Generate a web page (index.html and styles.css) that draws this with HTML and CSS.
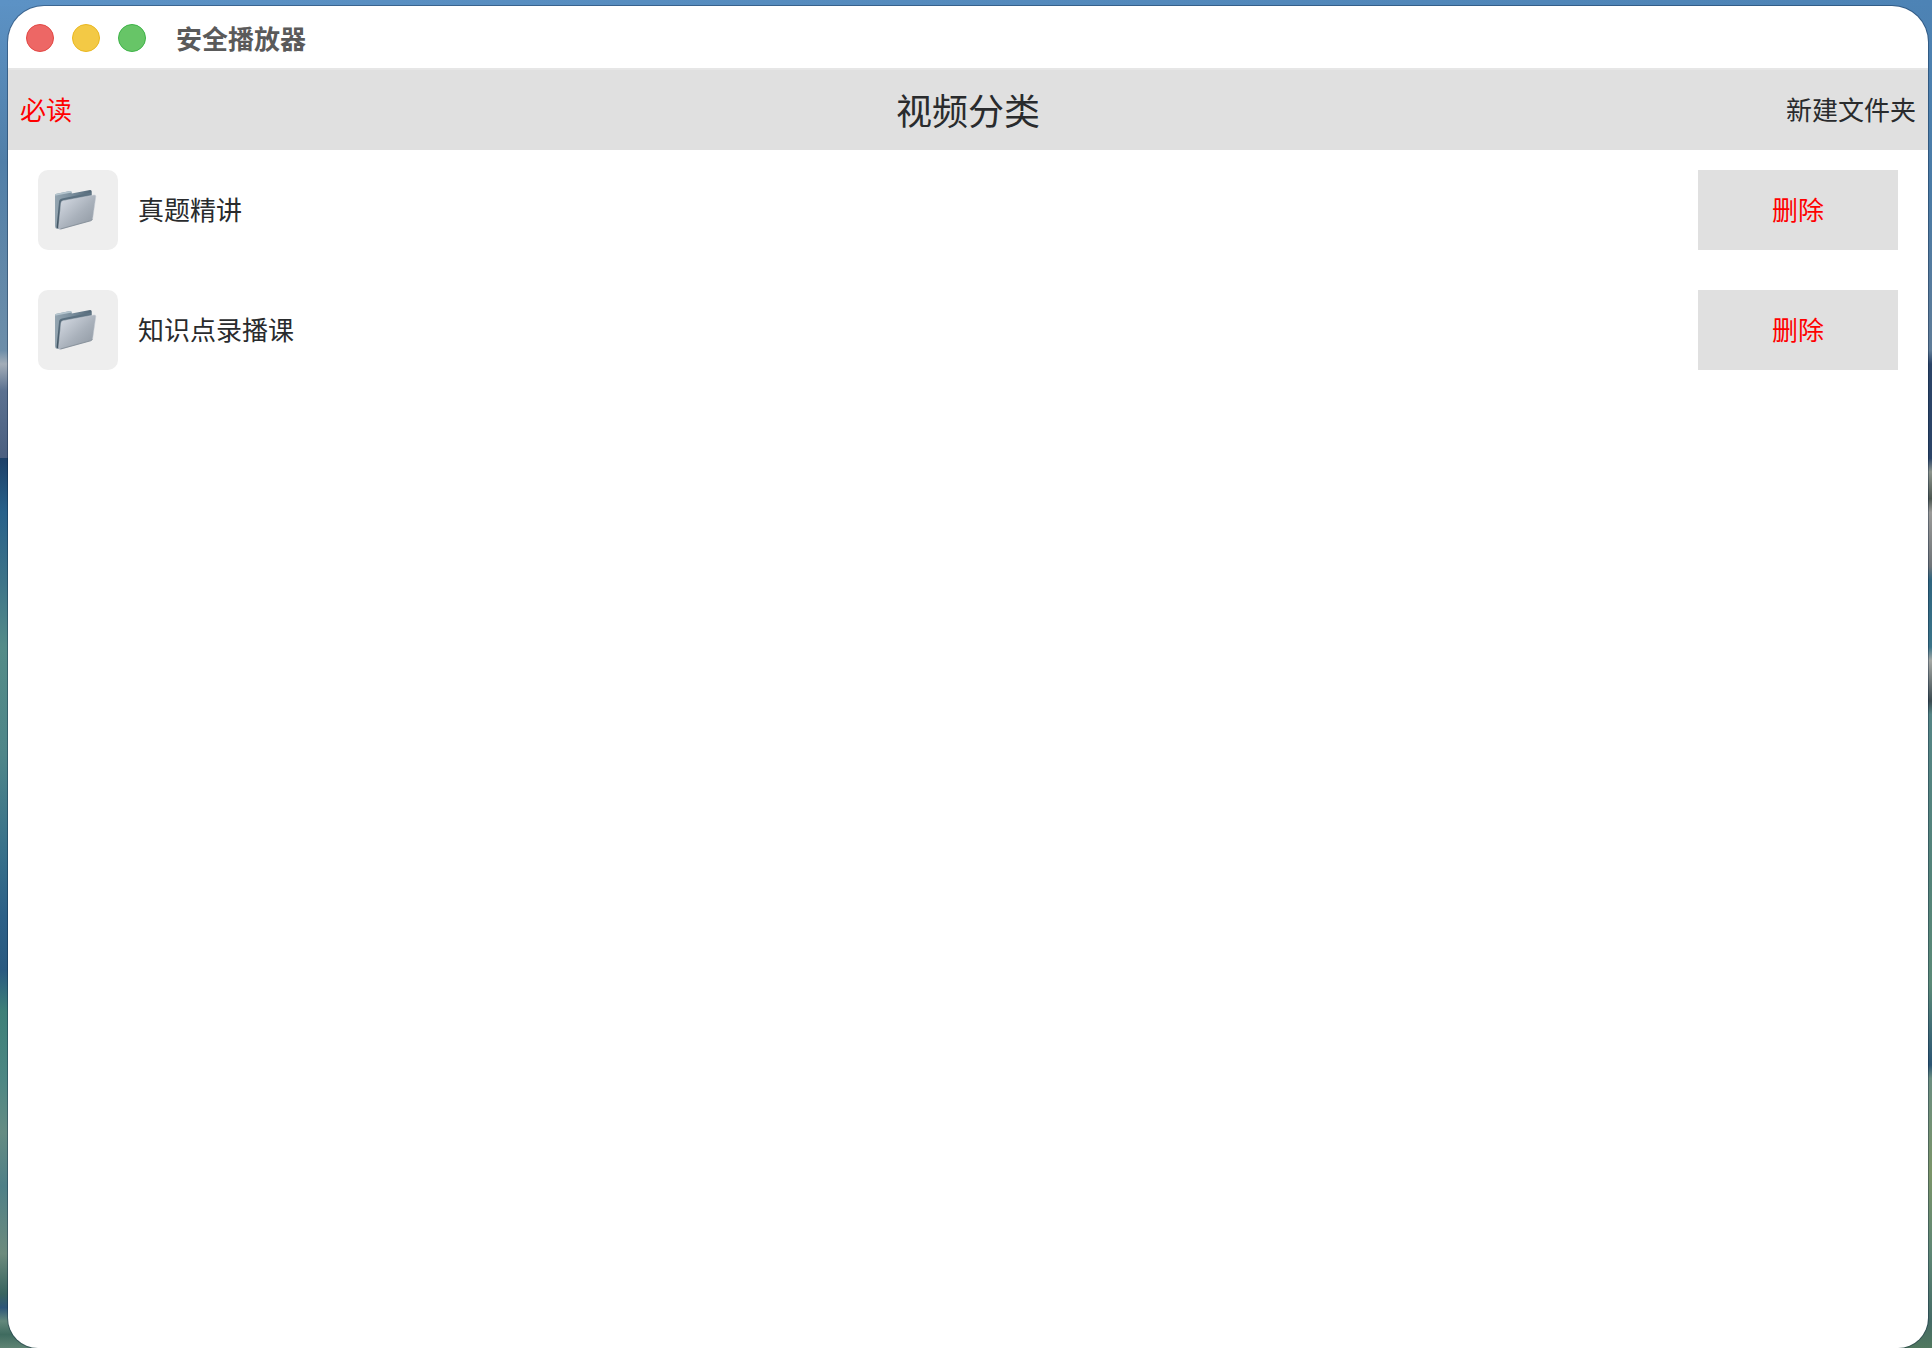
FILE: index.html
```html
<!DOCTYPE html>
<html lang="zh-CN">
<head>
<meta charset="utf-8">
<meta name="viewport" content="width=device-width, initial-scale=1">
<title>安全播放器</title>
<link rel="stylesheet" href="styles.css">
</head>
<body>
<svg class="defs" width="0" height="0" aria-hidden="true">
  <defs>
    <linearGradient id="front" x1="0" y1="0" x2="1" y2="1">
      <stop offset="0" stop-color="#bcc6d0"/>
      <stop offset="0.15" stop-color="#cdd3dc"/>
      <stop offset="0.55" stop-color="#a9b1bb"/>
      <stop offset="1" stop-color="#8b949e"/>
    </linearGradient>
    <linearGradient id="back" x1="0" y1="0" x2="1" y2="0">
      <stop offset="0" stop-color="#94a5b1"/>
      <stop offset="0.35" stop-color="#8094a2"/>
      <stop offset="1" stop-color="#526777"/>
    </linearGradient>
    <linearGradient id="inner" x1="0" y1="0" x2="0" y2="1">
      <stop offset="0" stop-color="#5f7585"/>
      <stop offset="1" stop-color="#405361"/>
    </linearGradient>
    <symbol id="folder" viewBox="0 0 80 80">
      <path fill="url(#back)" d="M17 25.500Q17 24 18.500 23.700L32 21Q33.500 20.800 33.700 22.500V23.500L52 20Q53.700 19.800 53.700 21.500V27L24 33L20 59Q17 59 17 56Z"/>
      <path fill="#b5c5ce" d="M17 25.500Q17 24 18.500 23.700L32 21Q33.500 20.800 33.700 22.500L18 25.500Z"/>
      <path fill="url(#inner)" d="M21 32Q21 29 24 28.500L53 22.500V27L24 32L21 59L18.500 57.500Z"/>
      <path fill="url(#front)" stroke="#c5cbd3" stroke-width="0.500" d="M23 33Q23.200 31.200 25 30.700L56 25Q58 24.800 57.800 26.500L54.700 48.500Q54.500 50.300 52.800 50.800L22.500 59.300Q20.200 59.800 20.500 57.500Z"/>
      <path fill="none" stroke="#7b858f" stroke-width="0.800" d="M54.300 49.200Q54 50.300 52.800 50.700L22.500 59"/>
    </symbol>
  </defs>
</svg>
<div class="window">
  <header class="titlebar">
    <div class="lights">
      <button class="light close" type="button" aria-label="关闭"></button>
      <button class="light minimize" type="button" aria-label="最小化"></button>
      <button class="light zoom" type="button" aria-label="缩放"></button>
    </div>
    <span class="app-name">安全播放器</span>
  </header>
  <nav class="toolbar">
    <button class="tool notice" type="button">必读</button>
    <h1 class="heading">视频分类</h1>
    <button class="tool create" type="button">新建文件夹</button>
  </nav>
  <main>
    <ul class="folders">
      <li class="folder">
        <span class="thumb"><svg class="icon" aria-hidden="true"><use href="#folder"/></svg></span>
        <span class="name">真题精讲</span>
        <button class="delete" type="button">删除</button>
      </li>
      <li class="folder">
        <span class="thumb"><svg class="icon" aria-hidden="true"><use href="#folder"/></svg></span>
        <span class="name">知识点录播课</span>
        <button class="delete" type="button">删除</button>
      </li>
    </ul>
  </main>
</div>
</body>
</html>
```
FILE: styles.css
```css
* {
  box-sizing: border-box;
}

body {
  margin: 0;
  min-height: 100vh;
  padding: 6px 4px 0 8px;
  font: 26px/40px "Noto Sans CJK SC", sans-serif;
  color: #292b2d;
  /* top sky, then the lake scene down the left and right edges */
  background:
    linear-gradient(90deg, #5c92c5, #4d83b5) top / 100% 6px no-repeat,
    linear-gradient(#5c92c5 0, #517fa8 12%, #6d8ea9 26%, #a3adb8 27%, #5b7190 29%, #4b5f80 34%, #1d4068 34%, #28618a 38%, #3d7388 43%, #548c88 48%, #4f8689 56%, #38718a 63%, #2c6087 68%, #2a5a80 72%, #3e8078 75%, #4c8783 80%, #658c83 84%, #4f8087 88%, #6d8b7d 93%, #38645f 96%, #2d5578 97%, #63887c 98%, #3f6b5f 99%, #5f8474) left / 50% 100% no-repeat,
    linear-gradient(#4d83b5 0, #4a7ba6 14%, #5f7c98 26%, #2b4468 27%, #2b4468 34%, #8c948c 35%, #4c5650 37%, #9a9a98 38%, #6f7478 42%, #2f657f 43%, #3a7489 48%, #a5a8a4 49%, #3b4a50 52%, #558585 53%, #548379 65%, #5b8a77 73%, #2b5573 79%, #6b8e80 80%, #7b9468 87%, #5e8674 93%, #456b66 98%, #51785f) right / 50% 100% no-repeat;
}

.defs {
  position: absolute;
}

.window {
  min-height: calc(100vh - 6px);
  background: #fff;
  border-radius: 36px 36px 30px 30px;
  box-shadow: 0 0 0 1px rgba(0, 20, 50, 0.35);
  overflow: hidden;
}

.titlebar {
  display: flex;
  align-items: center;
  gap: 30px;
  height: 62px;
  padding: 2px 18px 0;
}

.lights {
  display: flex;
  gap: 18px;
}

.light {
  width: 28px;
  height: 28px;
  padding: 0;
  border: 1px solid;
  border-radius: 50%;
}

.close {
  background: #ed6765;
  border-color: #e24744;
}

.minimize {
  background: #f3c945;
  border-color: #e9b720;
}

.zoom {
  background: #67c567;
  border-color: #3eb348;
}

.app-name {
  font-weight: 700;
  color: #5a5a5a;
}

.toolbar {
  display: grid;
  grid-template-columns: 1fr auto 1fr;
  align-items: center;
  height: 82px;
  padding: 0 12px 2px;
  background: #e0e0e0;
  border-top: 2px solid #e6e6e6;
}

.tool,
.delete {
  border: 0;
  font: inherit;
  color: inherit;
  cursor: pointer;
}

.tool {
  padding: 0;
  background: none;
}

.toolbar .notice {
  justify-self: start;
  color: #f00;
}

.create {
  justify-self: end;
}

.heading {
  margin: 0;
  font-size: 36px;
  font-weight: 400;
}

.folders {
  margin: 0;
  padding: 0;
  list-style: none;
}

.folder {
  display: flex;
  align-items: center;
  gap: 20px;
  padding: 20px 30px;
}

.thumb {
  width: 80px;
  height: 80px;
  border-radius: 10px;
  background: #eee;
}

.icon {
  display: block;
  width: 80px;
  height: 80px;
}

.name {
  flex: 1;
  padding-bottom: 2px;
}

.delete {
  width: 200px;
  height: 80px;
  padding: 0 0 2px;
  background: #e0e0e0;
  color: #f00;
}
```
